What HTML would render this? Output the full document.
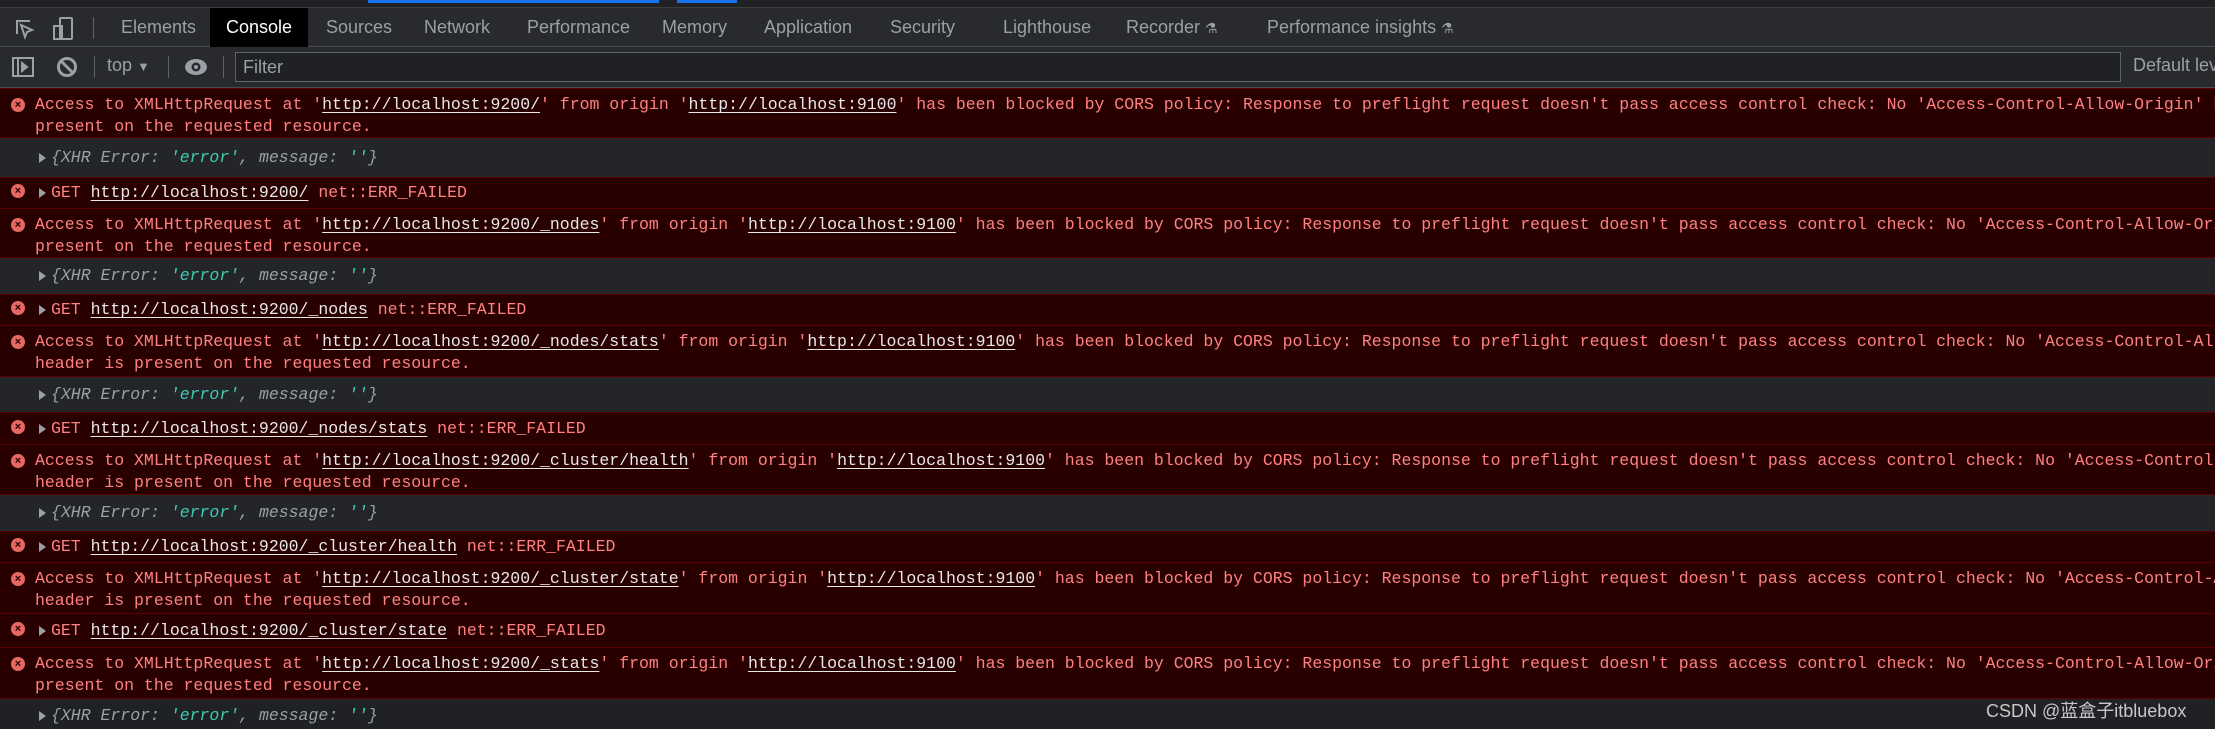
<!DOCTYPE html>
<html><head><meta charset="utf-8"><style>
*{margin:0;padding:0;box-sizing:border-box}
body{width:2215px;height:729px;overflow:hidden;background:#202124;position:relative;font-family:"Liberation Sans",sans-serif}
.top{position:absolute;left:0;top:0;width:2215px;height:7px;background:#202124}
.tabs{position:absolute;left:0;top:7px;width:2215px;height:40px;background:#292a2d;border-top:1px solid #3c3c3c;border-bottom:1px solid #494c50}
.tab{position:absolute;top:0;height:39px;line-height:38px;font-size:18px;color:#9aa0a6}
.tb{position:absolute;left:0;top:47px;width:2215px;height:41px;background:#292a2d;border-bottom:1px solid #494c50}
.row{position:absolute;left:0;width:2215px;overflow:hidden;white-space:nowrap;font-family:"Liberation Mono",monospace;font-size:16.5px;line-height:21.6px}
.e{background:#290000;border-top:1px solid #5c0000;color:#ff8080}
.x{background:#242528;border-top:1px solid #5c0000;color:#9aa0a6}
.l{position:absolute;left:35px}
a{color:#e8e8e8;text-decoration:underline;text-underline-offset:3px}
.ic{position:absolute;left:11px;width:14px;height:14px;border-radius:50%;background:#e46962;color:#290000;font:bold 11px/14px "Liberation Sans",sans-serif;text-align:center}
.tri{position:absolute;left:39px;width:0;height:0;border-left:7px solid #9aa0a6;border-top:5px solid transparent;border-bottom:5px solid transparent}
.s{color:#3fc9b4}
</style></head><body>
<div class="top"><div style="position:absolute;left:368px;top:0;width:291px;height:3px;background:#1a73e8"></div><div style="position:absolute;left:677px;top:0;width:60px;height:3px;background:#1a73e8"></div></div>
<div class="tabs">
<svg style="position:absolute;left:13px;top:9px" width="24" height="24" viewBox="0 0 24 24" fill="none" stroke="#9aa0a6" stroke-width="2"><path d="M4 17V4h13M8 8l4 12 2-5 5-2z"/></svg>
<svg style="position:absolute;left:52px;top:8px" width="24" height="26" viewBox="0 0 24 26" fill="none" stroke="#9aa0a6" stroke-width="2"><rect x="8" y="2" width="12" height="21" rx="1"/><rect x="2" y="10" width="8" height="13"/></svg>
<div style="position:absolute;left:93px;top:9px;width:1px;height:22px;background:#5f6368"></div>
<div class="tab" style="left:121px">Elements</div>
<div class="tab" style="left:210px;width:98px;background:#000;color:#fff;text-align:center">Console</div>
<div class="tab" style="left:326px">Sources</div>
<div class="tab" style="left:424px">Network</div>
<div class="tab" style="left:527px">Performance</div>
<div class="tab" style="left:662px">Memory</div>
<div class="tab" style="left:764px">Application</div>
<div class="tab" style="left:890px">Security</div>
<div class="tab" style="left:1003px">Lighthouse</div>
<div class="tab" style="left:1126px">Recorder <span style="font-size:14px">⚗</span></div>
<div class="tab" style="left:1267px">Performance insights <span style="font-size:14px">⚗</span></div>
</div>
<div class="tb">
<svg style="position:absolute;left:12px;top:9px" width="22" height="22" viewBox="0 0 22 22" fill="none" stroke="#9aa0a6" stroke-width="2"><rect x="1" y="2" width="20" height="18"/><path d="M6 2v18"/><path d="M10 7l5 4-5 4z" fill="#9aa0a6"/></svg>
<svg style="position:absolute;left:56px;top:9px" width="22" height="22" viewBox="0 0 22 22" fill="none" stroke="#9aa0a6" stroke-width="3"><circle cx="11" cy="11" r="8.5"/><path d="M5 5l12 12"/></svg>
<div style="position:absolute;left:94px;top:9px;width:1px;height:22px;background:#5f6368"></div>
<div style="position:absolute;left:107px;top:8px;font-size:18px;color:#9aa0a6">top <span style="font-size:13px">▼</span></div>
<div style="position:absolute;left:168px;top:9px;width:1px;height:22px;background:#5f6368"></div>
<svg style="position:absolute;left:184px;top:11px" width="24" height="18" viewBox="0 0 24 18"><ellipse cx="12" cy="9" rx="11" ry="8" fill="#9aa0a6"/><circle cx="12" cy="9" r="4.5" fill="#292a2d"/><circle cx="12" cy="9" r="2" fill="#9aa0a6"/></svg>
<div style="position:absolute;left:223px;top:9px;width:1px;height:22px;background:#5f6368"></div>
<div style="position:absolute;left:235px;top:5px;width:1886px;height:30px;border:1px solid #5f6368;background:#202124;color:#9aa0a6;font-size:18px;line-height:28px;padding-left:7px">Filter</div>
<div style="position:absolute;left:2133px;top:8px;font-size:18px;color:#9aa0a6;white-space:nowrap">Default levels</div>
</div>

<div class="row e" style="top:88px;height:49px"><div class="ic" style="top:9px">×</div><div class="l" style="top:5px">Access to XMLHttpRequest at '<a>http://localhost:9200/</a>' from origin '<a>http://localhost:9100</a>' has been blocked by CORS policy: Response to preflight request doesn't pass access control check: No 'Access-Control-Allow-Origin' header is<br>present on the requested resource.</div></div>
<div class="row x" style="top:137px;height:40px"><div class="tri" style="top:15px"></div><div class="l" style="left:51px;top:9px"><i>{XHR Error: <span class="s">'error'</span>, message: <span class="s">''</span>}</i></div></div>
<div class="row e" style="top:177px;height:31px"><div class="ic" style="top:6px">×</div><div class="tri" style="top:10px"></div><div class="l" style="left:51px;top:4px">GET <a>http://localhost:9200/</a> net::ERR_FAILED</div></div>

<div class="row e" style="top:208px;height:49px"><div class="ic" style="top:9px">×</div><div class="l" style="top:5px">Access to XMLHttpRequest at '<a>http://localhost:9200/_nodes</a>' from origin '<a>http://localhost:9100</a>' has been blocked by CORS policy: Response to preflight request doesn't pass access control check: No 'Access-Control-Allow-Origin' header is<br>present on the requested resource.</div></div>
<div class="row x" style="top:257px;height:37px"><div class="tri" style="top:13px"></div><div class="l" style="left:51px;top:7px"><i>{XHR Error: <span class="s">'error'</span>, message: <span class="s">''</span>}</i></div></div>
<div class="row e" style="top:294px;height:31px"><div class="ic" style="top:6px">×</div><div class="tri" style="top:10px"></div><div class="l" style="left:51px;top:4px">GET <a>http://localhost:9200/_nodes</a> net::ERR_FAILED</div></div>

<div class="row e" style="top:325px;height:51px"><div class="ic" style="top:9px">×</div><div class="l" style="top:5px">Access to XMLHttpRequest at '<a>http://localhost:9200/_nodes/stats</a>' from origin '<a>http://localhost:9100</a>' has been blocked by CORS policy: Response to preflight request doesn't pass access control check: No 'Access-Control-Allow-Origin'<br>header is present on the requested resource.</div></div>
<div class="row x" style="top:376px;height:36px"><div class="tri" style="top:13px"></div><div class="l" style="left:51px;top:7px"><i>{XHR Error: <span class="s">'error'</span>, message: <span class="s">''</span>}</i></div></div>
<div class="row e" style="top:412px;height:32px"><div class="ic" style="top:7px">×</div><div class="tri" style="top:11px"></div><div class="l" style="left:51px;top:5px">GET <a>http://localhost:9200/_nodes/stats</a> net::ERR_FAILED</div></div>

<div class="row e" style="top:444px;height:50px"><div class="ic" style="top:9px">×</div><div class="l" style="top:5px">Access to XMLHttpRequest at '<a>http://localhost:9200/_cluster/health</a>' from origin '<a>http://localhost:9100</a>' has been blocked by CORS policy: Response to preflight request doesn't pass access control check: No 'Access-Control-Allow-Origin'<br>header is present on the requested resource.</div></div>
<div class="row x" style="top:494px;height:37px"><div class="tri" style="top:13px"></div><div class="l" style="left:51px;top:7px"><i>{XHR Error: <span class="s">'error'</span>, message: <span class="s">''</span>}</i></div></div>
<div class="row e" style="top:531px;height:31px"><div class="ic" style="top:6px">×</div><div class="tri" style="top:10px"></div><div class="l" style="left:51px;top:4px">GET <a>http://localhost:9200/_cluster/health</a> net::ERR_FAILED</div></div>

<div class="row e" style="top:562px;height:51px"><div class="ic" style="top:9px">×</div><div class="l" style="top:5px">Access to XMLHttpRequest at '<a>http://localhost:9200/_cluster/state</a>' from origin '<a>http://localhost:9100</a>' has been blocked by CORS policy: Response to preflight request doesn't pass access control check: No 'Access-Control-Allow-Origin'<br>header is present on the requested resource.</div></div>
<div class="row e" style="top:613px;height:34px"><div class="ic" style="top:8px">×</div><div class="tri" style="top:12px"></div><div class="l" style="left:51px;top:6px">GET <a>http://localhost:9200/_cluster/state</a> net::ERR_FAILED</div></div>

<div class="row e" style="top:647px;height:51px"><div class="ic" style="top:9px">×</div><div class="l" style="top:5px">Access to XMLHttpRequest at '<a>http://localhost:9200/_stats</a>' from origin '<a>http://localhost:9100</a>' has been blocked by CORS policy: Response to preflight request doesn't pass access control check: No 'Access-Control-Allow-Origin' header is<br>present on the requested resource.</div></div>
<div class="row x" style="top:698px;height:31px;background:#202124"><div class="tri" style="top:12px"></div><div class="l" style="left:51px;top:6px"><i>{XHR Error: <span class="s">'error'</span>, message: <span class="s">''</span>}</i></div></div>

<div style="position:absolute;left:1986px;top:697px;font-family:'Liberation Sans','Noto Sans CJK SC',sans-serif;font-size:18px;color:#c8c8c8;white-space:nowrap">CSDN @蓝盒子itbluebox</div>
</body></html>
